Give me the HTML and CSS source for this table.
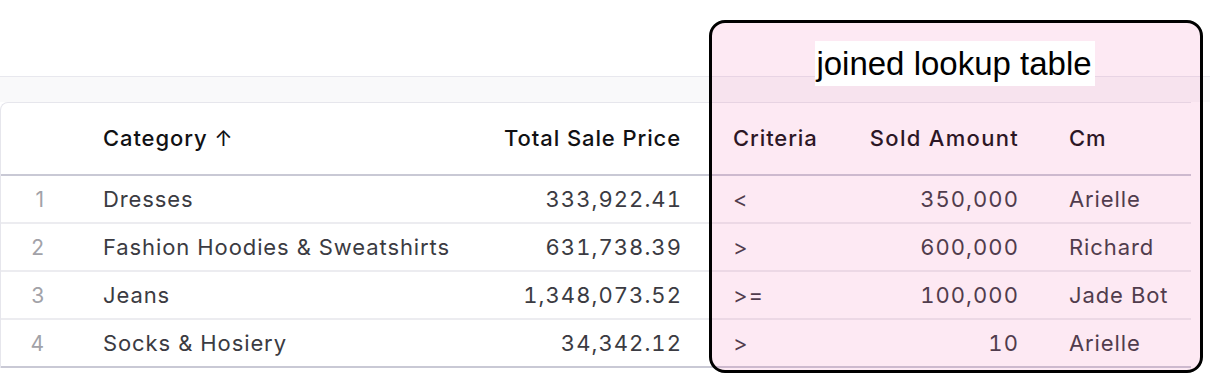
FILE: index.html
```html
<!DOCTYPE html>
<html>
<head>
<meta charset="utf-8">
<link rel="stylesheet" href="styles.css">
</head>
<body>
<div class="page">
  <div class="toolbar"></div>
  <div class="card">
    <div class="row head">
      <div class="cell idx"></div>
      <div class="cell left">Category <span class="arrow">↑</span></div>
      <div class="cell right">Total Sale Price</div>
      <div class="cell crit">Criteria</div>
      <div class="cell right sold">Sold Amount</div>
      <div class="cell cm">Cm</div>
    </div>
    <div class="row">
      <div class="cell idx">1</div>
      <div class="cell left">Dresses</div>
      <div class="cell right num">333,922.41</div>
      <div class="cell crit">&lt;</div>
      <div class="cell right sold num">350,000</div>
      <div class="cell cm">Arielle</div>
    </div>
    <div class="row">
      <div class="cell idx">2</div>
      <div class="cell left">Fashion Hoodies &amp; Sweatshirts</div>
      <div class="cell right num">631,738.39</div>
      <div class="cell crit">&gt;</div>
      <div class="cell right sold num">600,000</div>
      <div class="cell cm">Richard</div>
    </div>
    <div class="row">
      <div class="cell idx">3</div>
      <div class="cell left">Jeans</div>
      <div class="cell right num">1,348,073.52</div>
      <div class="cell crit">&gt;=</div>
      <div class="cell right sold num">100,000</div>
      <div class="cell cm">Jade Bot</div>
    </div>
    <div class="row last">
      <div class="cell idx">4</div>
      <div class="cell left">Socks &amp; Hosiery</div>
      <div class="cell right num">34,342.12</div>
      <div class="cell crit">&gt;</div>
      <div class="cell right sold num">10</div>
      <div class="cell cm">Arielle</div>
    </div>
  </div>
  <div class="highlight">
    <div class="label"><span>joined lookup table</span></div>
  </div>
</div>
</body>
</html>
```

FILE: styles.css
```css
html, body {
  margin: 0;
  padding: 0;
  background: #ffffff;
}
.page {
  position: relative;
  width: 1210px;
  height: 380px;
  overflow: hidden;
  padding-top: 76px;
  box-sizing: border-box;
  font-family: Inter, "Noto Sans", sans-serif;
}
.toolbar {
  height: 25px;
  border-top: 1px solid #e8e8ee;
  background: #f9f9fa;
}
.card {
  border-top: 1px solid #e6e6ec;
  border-left: 1px solid #e6e6ec;
  border-top-left-radius: 8px;
  background: #ffffff;
  width: 1190px;
}
.row {
  display: grid;
  grid-template-columns: 88px 392px 228px 132px 202px 148px;
  height: 48px;
  border-bottom: 2px solid #ececf0;
  box-sizing: border-box;
  align-items: center;
  font-size: 22px;
  letter-spacing: 0.9px;
  color: #3b3b42;
}
.row.head {
  height: 73px;
  border-bottom: 2px solid #c9c9d5;
  color: #111114;
  font-weight: 500;
  padding-bottom: 1px;
}
.row.last {
  border-bottom: 2px solid #c9c9d5;
}
.cell {
  white-space: nowrap;
}
.idx {
  text-align: right;
  padding-right: 44px;
  color: #a2a2a8;
  font-size: 21px;
}
.left {
  padding-left: 14px;
}
.right {
  text-align: right;
  padding-right: 27px;
}
.head .right {
  padding-right: 28px;
}
.num {
  font-variant-numeric: tabular-nums;
  letter-spacing: 1.05px;
}
.crit {
  padding-left: 24px;
}
.sold {
  padding-right: 24px;
}
.head .sold {
  padding-right: 24px;
  letter-spacing: 1.3px;
}
.cm {
  padding-left: 26px;
}
.arrow {
  font-weight: 400;
}
.highlight {
  position: absolute;
  left: 709px;
  top: 20px;
  width: 494px;
  height: 353px;
  box-sizing: border-box;
  border: 3px solid #000000;
  border-radius: 16px;
  background: rgba(236, 72, 153, 0.12);
}
.label {
  display: flex;
  justify-content: center;
  margin-top: 18px;
  margin-left: -2px;
}
.label span {
  background: #ffffff;
  color: #000000;
  font-family: "Liberation Sans", Arial, sans-serif;
  font-size: 33px;
  line-height: 45px;
  padding: 0 3px 0 1px;
}
```
